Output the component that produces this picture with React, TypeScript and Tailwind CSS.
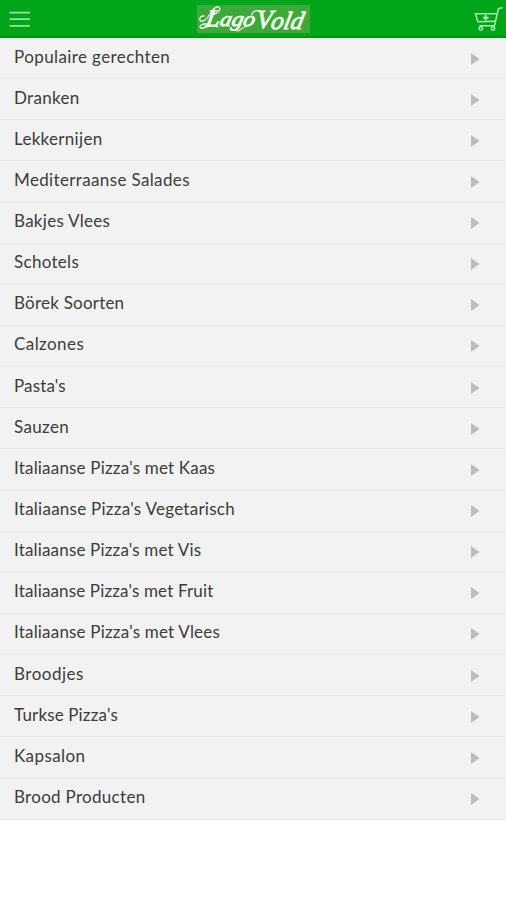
interface Category {
    name: string;
    className: string;
}

const categories: Category[] = [
    { name: 'Populaire gerechten', className: 'tracking-[0.4px]' },
    { name: 'Dranken', className: 'tracking-[0.3px]' },
    { name: 'Lekkernijen', className: 'tracking-[0.3px]' },
    { name: 'Mediterraanse Salades', className: 'tracking-[0.36px]' },
    { name: 'Bakjes Vlees', className: 'tracking-[0.28px]' },
    { name: 'Schotels', className: 'tracking-[0.3px]' },
    { name: 'Börek Soorten', className: 'tracking-[0.22px]' },
    { name: 'Calzones', className: 'tracking-[0.42px]' },
    { name: "Pasta's", className: 'tracking-[0.15px]' },
    { name: 'Sauzen', className: 'tracking-[0.35px]' },
    { name: "Italiaanse Pizza's met Kaas", className: 'tracking-[0.19px]' },
    { name: "Italiaanse Pizza's Vegetarisch", className: 'tracking-[0.26px]' },
    { name: "Italiaanse Pizza's met Vis", className: 'tracking-[0.17px]' },
    { name: "Italiaanse Pizza's met Fruit", className: 'tracking-[0.15px]' },
    { name: "Italiaanse Pizza's met Vlees", className: 'tracking-[0.19px]' },
    { name: 'Broodjes', className: 'tracking-[0.5px]' },
    { name: "Turkse Pizza's", className: 'tracking-[0.15px]' },
    { name: 'Kapsalon', className: 'tracking-[0.4px]' },
    { name: 'Brood Producten', className: 'tracking-[0.3px]' },
];

const MenuIcon = () => (
    <svg width="22" height="18" viewBox="0 0 22 18" stroke="#94e49a" strokeWidth="1.8">
        <path d="M0.5 2.7H21M0.5 9.2H21M0.5 15.8H21" />
    </svg>
);

const CartIcon = () => (
    <svg width="30" height="27" viewBox="0 0 30 27" fill="none" stroke="#a9ecad" strokeWidth="1.5" strokeLinecap="round" strokeLinejoin="round">
        <path d="M28 2.8L24.5 3.5L20.4 20.8H6" />
        <path d="M22 8.8H1.3L4 16.8L21 16.2" />
        <path d="M11.8 10.8V14.8M9.8 12.8H13.8" strokeWidth="2" />
        <circle cx="6.8" cy="23.5" r="1.7" />
        <circle cx="19.1" cy="23.5" r="1.7" />
    </svg>
);

const Logo = () => (
    <svg className="overflow-visible" width="113" height="28" viewBox="0 0 113 28" fill="none" stroke="#f2fcee" strokeLinecap="round">
        <rect width="113" height="28" fill="#3fa83b" stroke="none" />
        <g fill="#f2fcee" fontFamily="'Liberation Serif', serif" fontStyle="italic" strokeWidth="0.8">
            <text transform="translate(8 21) skewX(-10)" fontSize="24" textLength="14" lengthAdjust="spacingAndGlyphs">L</text>
            <text transform="translate(22 21) skewX(-12)" fontSize="21" textLength="35" lengthAdjust="spacingAndGlyphs">ago</text>
            <text transform="translate(59 23) skewX(-4)" fontSize="26" textLength="16" lengthAdjust="spacingAndGlyphs">V</text>
            <text transform="translate(73 24) skewX(-12)" fontSize="25" textLength="32" lengthAdjust="spacingAndGlyphs">old</text>
        </g>
        {/* flourishes around the L, below the g and into the V */}
        <path d="M7 11C2 11 1 17 6 16C12 15 14 3 20 2C25 1 23 8 17 9" strokeWidth="1.3" />
        <path d="M10 19C2 18 1 24 6 23C11 22 14 19 21 22" strokeWidth="1.3" />
        <path d="M40 26C45 26 46 20 55 19M55 10C55 6 60 4 66 7" strokeWidth="1.2" />
    </svg>
);

const Header = () => (
    <header className="flex h-[38px] items-start justify-between border-b-2 border-[#009413] bg-[#00a51a]">
        <button type="button" aria-label="Menu" className="mt-2.5 ml-[9px] w-[30px]">
            <MenuIcon />
        </button>
        <div className="mt-[5px] mr-[7px]">
            <Logo />
        </div>
        <button type="button" aria-label="Winkelwagen" className="mt-[5px] mr-[2px]">
            <CartIcon />
        </button>
    </header>
);

const CategoryRow = ({ name, className }: Category) => (
    <li className="flex h-[41.15px] justify-between border-b border-[#e8e8e8] bg-[#f2f2f2] pr-[26px] pl-3.5">
        <span className={`pt-[6.5px] text-[17px] leading-6 whitespace-nowrap text-[#3c3c3c] ${className}`}>{name}</span>
        <svg className="mt-[13.5px]" width="10" height="14" viewBox="0 0 10 14" fill="#bdbdbd">
            <path d="M1 1V13L9.5 7Z" />
        </svg>
    </li>
);

const App = () => (
    <div className="min-h-screen bg-white font-[Lato,sans-serif]">
        <Header />
        <ul>
            {categories.map((category) => (
                <CategoryRow key={category.name} {...category} />
            ))}
        </ul>
    </div>
);

export default App;
